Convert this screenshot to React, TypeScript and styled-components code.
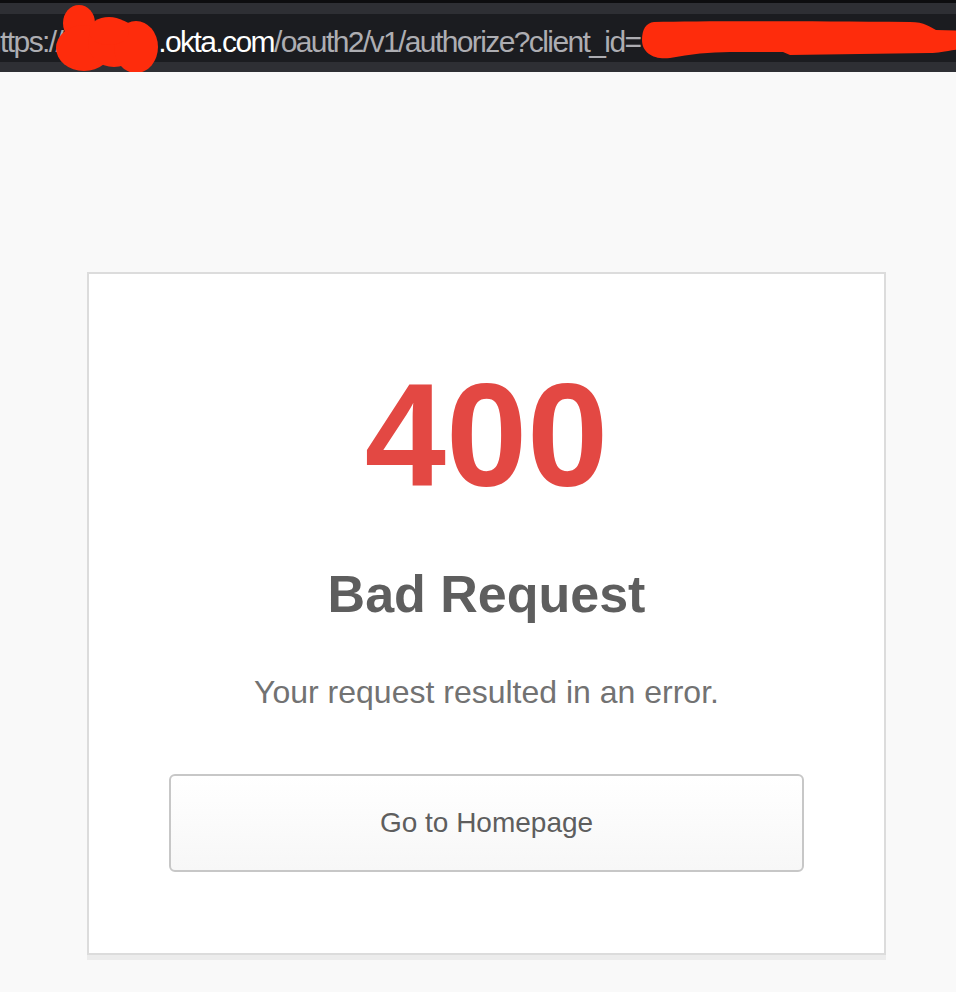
import React from 'react';
import styled, { createGlobalStyle } from 'styled-components';

const GlobalStyle = createGlobalStyle`
    html, body {
        margin: 0;
        padding: 0;
        background: #f9f9f9;
    }
    body {
        font-family: 'Liberation Sans', Arial, sans-serif;
        overflow: hidden;
    }
`;

const Page = styled.div`
    width: 956px;
    min-height: 992px;
    display: flex;
    flex-direction: column;
    background: #f9f9f9;
`;

const Chrome = styled.header`
    display: flex;
    flex-direction: column;
    position: relative;
    overflow: hidden;
`;

const Band = styled.div<{ $height: number; $color: string }>`
    height: ${(p) => p.$height}px;
    background: ${(p) => p.$color};
`;

const UrlField = styled.div`
    height: 48px;
    box-sizing: border-box;
    padding-top: 13px;
    background: #1b1c20;
    white-space: nowrap;
    display: flex;
    align-items: flex-start;
`;

const UrlText = styled.div`
    margin-left: -15px;
    font-size: 30px;
    line-height: 30px;
    letter-spacing: -1.6px;
    color: #adadb2;
`;

const Host = styled.span`
    color: #ffffff;
`;

const Redacted = styled.span<{ $width: number }>`
    display: inline-block;
    position: relative;
    width: ${(p) => p.$width}px;
    height: 30px;
    vertical-align: top;
`;

const Scribble = styled.svg<{ $left: number; $top: number }>`
    position: absolute;
    left: ${(p) => p.$left}px;
    top: ${(p) => p.$top}px;
    overflow: visible;
`;

const Main = styled.main`
    display: flex;
    justify-content: flex-start;
    padding: 200px 0 0 87px;
`;

const Card = styled.section`
    width: 799px;
    box-sizing: border-box;
    background: #ffffff;
    border: 2px solid #dcdcdc;
    box-shadow: 0 5px 0 rgba(0, 0, 0, 0.05);
    padding: 89px 80px 81px;
    display: flex;
    flex-direction: column;
    align-items: center;
    text-align: center;
`;

const Code = styled.h1`
    margin: 0;
    font-size: 146px;
    line-height: 146px;
    font-weight: 700;
    color: #e34843;
`;

const Title = styled.h2`
    margin: 59px 0 0;
    font-size: 52px;
    line-height: 52px;
    font-weight: 700;
    color: #5e5e5e;
`;

const Message = styled.p`
    margin: 56px 0 0;
    font-size: 32px;
    line-height: 32px;
    color: #727272;
`;

const HomeButton = styled.button`
    margin-top: 66px;
    width: 100%;
    height: 98px;
    border: 2px solid #c7c7c7;
    border-radius: 6px;
    background: linear-gradient(#ffffff, #f7f7f7);
    font-family: 'Liberation Sans', Arial, sans-serif;
    font-size: 28px;
    color: #5e5e5e;
    cursor: pointer;
`;

const InkRed = '#fe2c0c';

const SubdomainScribble: React.FC = () => (
    <Scribble $left={-8} $top={-24} width="108" height="72" viewBox="0 0 108 72">
        <g fill={InkRed}>
            <ellipse cx="25" cy="20" rx="16" ry="18" />
            <ellipse cx="30" cy="45" rx="28" ry="23" />
            <ellipse cx="60" cy="40" rx="26" ry="24" />
            <ellipse cx="82" cy="44" rx="22" ry="26" />
            <ellipse cx="55" cy="28" rx="20" ry="14" />
        </g>
    </Scribble>
);

const ClientIdScribble: React.FC = () => (
    <Scribble $left={0} $top={-6} width="320" height="38" viewBox="0 0 320 38">
        <path
            fill={InkRed}
            d="M14 1 C60 0 150 0 270 1 C285 1 290 6 296 9 L330 10 L330 27 C310 29 300 32 290 32 L150 34 L143 31 L90 31 C70 31 50 33 30 37 C14 39 2 32 2 19 C2 8 6 2 14 1 Z"
        />
    </Scribble>
);

const App: React.FC = () => {
    return (
        <Page>
            <GlobalStyle />
            <Chrome>
                <Band $height={3} $color="#0d0d0f" />
                <Band $height={11} $color="#2e2f34" />
                <UrlField>
                    <UrlText>
                        https://
                        <Redacted $width={96}>
                            <SubdomainScribble />
                        </Redacted>
                        <Host>.okta.com</Host>/oauth2/v1/authorize?client_id=
                        <Redacted $width={320}>
                            <ClientIdScribble />
                        </Redacted>
                    </UrlText>
                </UrlField>
                <Band $height={10} $color="#2e2f34" />
            </Chrome>
            <Main>
                <Card>
                    <Code>400</Code>
                    <Title>Bad Request</Title>
                    <Message>Your request resulted in an error.</Message>
                    <HomeButton type="button">Go to Homepage</HomeButton>
                </Card>
            </Main>
        </Page>
    );
};

export default App;
